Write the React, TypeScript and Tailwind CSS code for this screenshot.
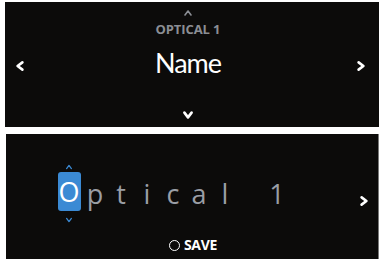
import React from 'react';

const Chevron = ({ dir, className, size = 10, stroke = 2 }: { dir: 'up' | 'down' | 'left' | 'right'; className?: string; size?: number; stroke?: number }) => {
  const pts = {
    up: '2,7 5,3 8,7',
    down: '2,3 5,7 8,3',
    left: '7,2 3,5 7,8',
    right: '3,2 7,5 3,8',
  }[dir];
  return (
    <svg width={size} height={size} viewBox="0 0 10 10" className={className}>
      <polyline points={pts} fill="none" stroke="currentColor" strokeWidth={stroke} strokeLinecap="round" strokeLinejoin="round" />
    </svg>
  );
};

const chars = ['O', 'p', 't', 'i', 'c', 'a', 'l', ' ', '1'];

const App: React.FC = () => {
  return (
    <div className="w-[384px] h-[262px] bg-white overflow-hidden" style={{ fontFamily: '"Open Sans", "Noto Sans", sans-serif' }}>
      {/* Top panel */}
      <div className="ml-[5px] mt-[2px] w-[374px] h-[125px] bg-[#0c0b0a] flex items-center">
        <div className="w-[29px] flex justify-center pt-[3px] text-white">
          <Chevron dir="left" size={12} stroke={2.2} />
        </div>
        <div className="flex-1 h-full flex flex-col items-center">
          <Chevron dir="up" size={10} stroke={1.6} className="mt-[6px] text-[#8b8e94]" />
          <div className="mt-[3px] text-[13px] leading-[16px] font-bold text-[#8b8e94] tracking-[-0.1px]">OPTICAL 1</div>
          <div className="mt-[10px] text-[27px] leading-[32px] text-white tracking-[-1px]" style={{ fontFamily: 'Lato, "Open Sans", sans-serif' }}>Name</div>
          <Chevron dir="down" size={12} stroke={2.2} className="mt-auto mb-[6px] text-white" />
        </div>
        <div className="w-[37px] flex justify-center pt-[3px] text-white">
          <Chevron dir="right" size={12} stroke={2.2} />
        </div>
      </div>

      {/* Bottom panel */}
      <div className="ml-[6px] mt-[7px] w-[373px] h-[125px] bg-[#0c0b0a] border-r border-[#7a7a7a] flex flex-col">
        <div className="flex items-center mt-[29px]">
          <div className="ml-[50px] flex">
            {chars.map((c, i) =>
              i === 0 ? (
                <div key={i} className="w-[26px] flex flex-col items-center">
                  <Chevron dir="up" size={8} stroke={1.6} className="text-[#3b8ad4]" />
                  <div className="mt-[1px] w-[23px] h-[39px] rounded-[3px] bg-[#3b8ad4] flex items-center justify-center text-white text-[27px] leading-[39px]">
                    {c}
                  </div>
                  <Chevron dir="down" size={8} stroke={1.6} className="mt-[5px] text-[#3b8ad4]" />
                </div>
              ) : (
                <div key={i} className="w-[26px] flex items-center justify-center text-[#9a9ea5] text-[27px] leading-[39px]">
                  {c}
                </div>
              )
            )}
          </div>
          <div className="ml-auto mr-[8px] pt-[14px] text-white">
            <Chevron dir="right" size={12} stroke={2.2} />
          </div>
        </div>
        <div className="mt-auto mb-[6px] flex items-center justify-center gap-[4px] text-white pl-[2px]">
          <span className="w-[11px] h-[11px] rounded-full border-[1.5px] border-white" />
          <span className="text-[14px] leading-[16px] font-bold tracking-[-0.3px]">SAVE</span>
        </div>
      </div>
    </div>
  );
};

export default App;
